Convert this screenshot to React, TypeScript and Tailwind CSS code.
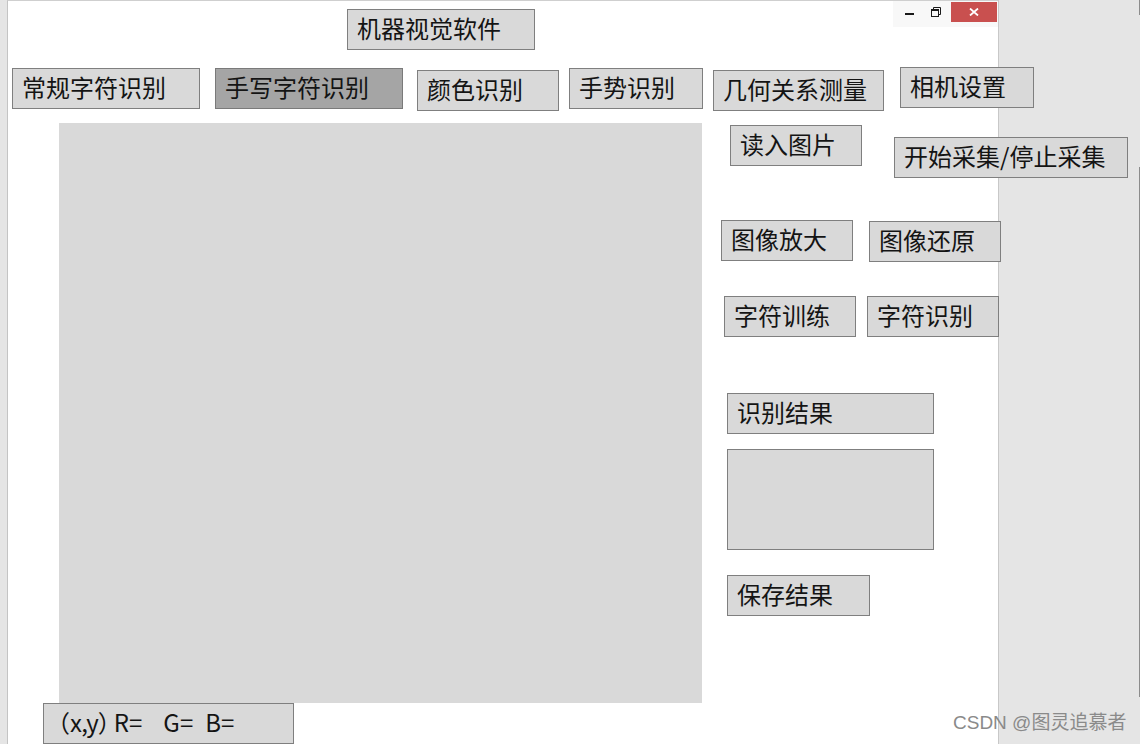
import React from "react";

const btn =
  "box-border h-[41px] shrink-0 border border-[#7f7f7f] bg-[#d9d9d9] flex items-center pl-[9px] pb-[4px] text-[24px] leading-none text-[#141414] whitespace-nowrap";

export default function App() {
  return (
    <div className="relative w-[1140px] h-[744px] overflow-hidden bg-[#e5e5e5] flex font-['Noto_Sans_CJK_SC','Noto_Sans',sans-serif]">
      <div className="w-[7px] shrink-0" />
      {/* window */}
      <div className="relative box-border w-[992px] h-[744px] shrink-0 bg-white border-l border-t border-r border-l-[#c4c4c4] border-t-[#cfcfcf] border-r-[#c8c8c8] flex flex-col">
        {/* title */}
        <div className="flex">
          <div className={`${btn} w-[188px] mt-[8px] ml-[339px]`}>机器视觉软件</div>
        </div>
        {/* tabs row */}
        <div className="flex items-start mt-[17px]">
          <div className={`${btn} w-[188px] mt-[1px] ml-[4px]`}>常规字符识别</div>
          <div className="box-border h-[41px] w-[188px] shrink-0 border border-[#7a7a7a] bg-[#a5a5a5] flex items-center pl-[9px] pb-[4px] text-[24px] leading-none text-[#141414] whitespace-nowrap mt-[1px] ml-[15px]">
            手写字符识别
          </div>
          <div className={`${btn} w-[142px] mt-[3px] ml-[14px]`}>颜色识别</div>
          <div className={`${btn} w-[134px] mt-[1px] ml-[10px]`}>手势识别</div>
          <div className={`${btn} w-[171px] mt-[3px] ml-[10px]`}>几何关系测量</div>
          <div className={`${btn} w-[134px] ml-[16px]`}>相机设置</div>
        </div>
        {/* main */}
        <div className="flex items-start">
          <div className="flex flex-col items-start shrink-0 w-[694px]">
            <div className="w-[643px] h-[580px] bg-[#d9d9d9] mt-[12px] ml-[51px]" />
            <div className={`${btn} w-[251px] ml-[35px] !pl-[14px] [font-feature-settings:'halt']`}>
              <span>（</span>
              <span className="tracking-[-1px]">x,y</span>
              <span className="mr-[4px]">）</span>
              <span className="mr-[21px]">R= </span>
              <span className="mr-[12px]">G= </span>
              <span>B=</span>
            </div>
          </div>
          <div className="flex flex-col items-start">
            <div className="flex items-start">
              <div className={`${btn} w-[132px] mt-[14px] ml-[28px]`}>读入图片</div>
              <div className={`${btn} w-[234px] mt-[26px] ml-[32px]`}>开始采集/停止采集</div>
            </div>
            <div className="flex items-start mt-[42px]">
              <div className={`${btn} w-[132px] ml-[19px]`}>图像放大</div>
              <div className={`${btn} w-[132px] mt-[1px] ml-[16px]`}>图像还原</div>
            </div>
            <div className="flex items-start mt-[34px]">
              <div className={`${btn} w-[132px] ml-[22px]`}>字符训练</div>
              <div className={`${btn} w-[132px] ml-[11px]`}>字符识别</div>
            </div>
            <div className={`${btn} w-[207px] mt-[56px] ml-[25px]`}>识别结果</div>
            <div className="box-border w-[207px] h-[101px] border border-[#7f7f7f] bg-[#d9d9d9] mt-[15px] ml-[25px]" />
            <div className={`${btn} w-[143px] mt-[25px] ml-[25px]`}>保存结果</div>
          </div>
        </div>
        {/* caption buttons */}
        <div className="absolute top-0 right-0 w-[105px] h-[26px] bg-[#f8f8f8] flex items-start">
          <svg className="ml-[12px] mt-[12px]" width="9" height="3" viewBox="0 0 9 3">
            <rect x="0" y="0" width="9" height="2" fill="#1a1a1a" />
          </svg>
          <svg className="ml-[17px] mt-[6px]" width="10" height="10" viewBox="0 0 10 10">
            <path d="M2.5 2.5V0.5H9.5V7.5H7.5" fill="none" stroke="#1a1a1a" strokeWidth="1" />
            <rect x="0.5" y="2.5" width="7" height="7" fill="none" stroke="#1a1a1a" strokeWidth="1" />
            <rect x="0.5" y="2.5" width="7" height="1.5" fill="#1a1a1a" />
          </svg>
          <div className="ml-[10px] mt-[1px] w-[46px] h-[20px] bg-[#c9504f] flex items-center justify-center">
            <svg width="10" height="8" viewBox="0 0 10 8">
              <path d="M1 0.5L9 7.5M9 0.5L1 7.5" stroke="#ffffff" strokeWidth="1.8" />
            </svg>
          </div>
        </div>
      </div>
      <div className="w-[140px] shrink-0" />
      <div className="w-[1px] shrink-0 flex flex-col">
        <div className="h-[15px] bg-[#8c8c8c]" />
        <div className="h-[152px]" />
        <div className="h-[530px] bg-[#8c8c8c]" />
      </div>
      {/* watermark */}
      <div className="absolute left-[953px] top-[712px] text-[19px] leading-[22px] text-[#8a8a8a] whitespace-nowrap font-['Liberation_Sans','Noto_Sans_CJK_SC',sans-serif]">
        CSDN @图灵追慕者
      </div>
    </div>
  );
}
